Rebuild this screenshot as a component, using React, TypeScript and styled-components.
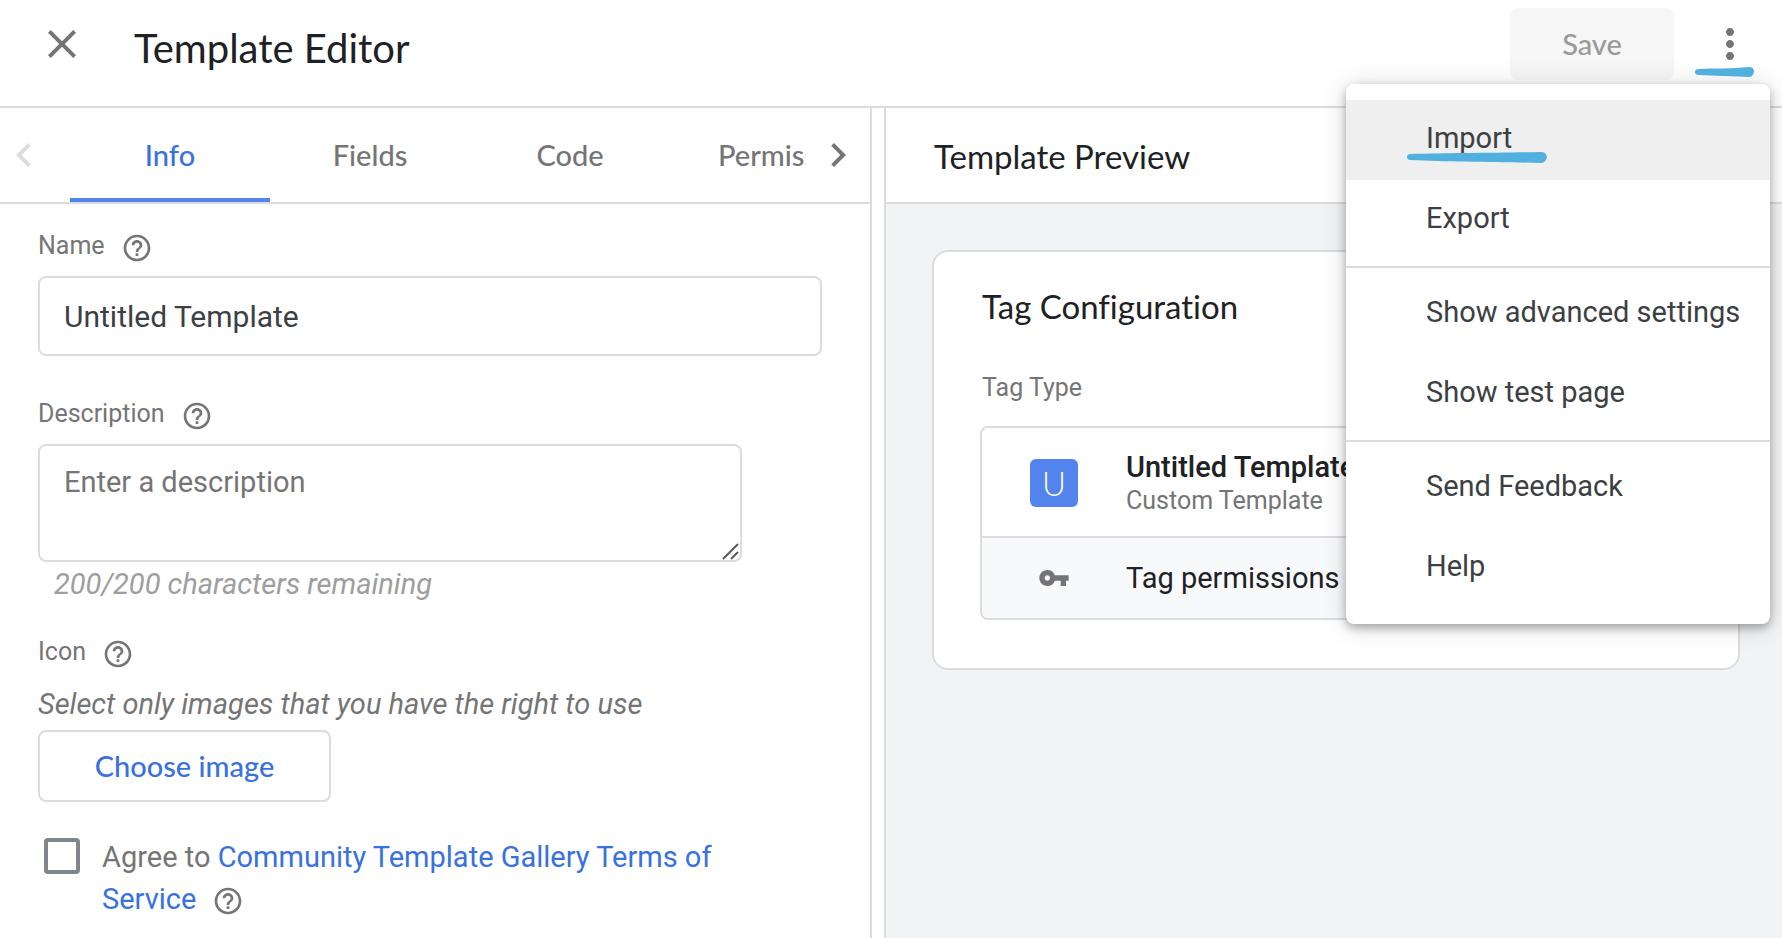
import React, { useId } from 'react';
import styled, { createGlobalStyle } from 'styled-components';
import {
  MdChevronLeft,
  MdChevronRight,
  MdClose,
  MdHelpOutline,
  MdMoreVert,
  MdVpnKey,
} from 'react-icons/md';

const color = {
  line: '#dadce0',
  text: '#202124',
  body: '#3c4043',
  muted: '#757575',
  link: '#3871e0',
  accent: '#5383ec',
  canvas: '#f1f3f4',
};

const display = "Lato, 'Open Sans', sans-serif";

const GlobalStyle = createGlobalStyle`
  *, *::before, *::after { box-sizing: border-box; }
  body {
    margin: 0;
    background: #fff;
    color: ${color.text};
    font-family: Roboto, 'Liberation Sans', sans-serif;
    font-size: 29px;
    line-height: 32px;
  }
  button, input, textarea { font: inherit; color: inherit; margin: 0; }
  h1, h2, h3, p { margin: 0; }
`;

const Page = styled.div`
  display: flex;
  flex-direction: column;
  min-height: 100vh;
`;

const Header = styled.header`
  display: flex;
  align-items: flex-start;
  padding: 8px 12px 18px 38px;
  border-bottom: 2px solid ${color.line};
`;

const IconButton = styled.button<{ $width: number }>`
  display: flex;
  flex: none;
  align-items: center;
  justify-content: center;
  width: ${(p) => p.$width}px;
  height: 72px;
  padding: 0;
  border: 0;
  background: none;
  color: ${color.muted};
  cursor: pointer;
`;

const PageTitle = styled.h1`
  flex: 1;
  padding-left: 48px;
  font: 400 40px/80px ${display};
`;

const SaveButton = styled.button`
  width: 164px;
  height: 72px;
  margin-right: 16px;
  padding: 0;
  border: 0;
  border-radius: 8px;
  background: #f6f6f6;
  color: #9a9a9a;
  font: 500 29px/32px ${display};
`;

const MenuAnchor = styled.div`
  position: relative;
  flex: none;
`;

const Menu = styled.div`
  position: absolute;
  z-index: 2;
  top: 76px;
  right: 0;
  min-width: 424px;
  padding: 16px 0;
  border-radius: 8px;
  background: #fff;
  box-shadow: 0 4px 10px rgba(0, 0, 0, 0.3), 0 2px 28px rgba(0, 0, 0, 0.14);
`;

const MenuItem = styled.button<{ $active?: boolean }>`
  position: relative;
  display: block;
  width: 100%;
  height: 80px;
  padding: 0 24px 4px 80px;
  border: 0;
  background: ${(p) => (p.$active ? '#efefef' : 'transparent')};
  color: ${color.body};
  text-align: left;
  white-space: nowrap;
  cursor: pointer;
`;

const MenuDivider = styled.hr`
  height: 2px;
  margin: 6px 0;
  border: 0;
  background: ${color.line};
`;

const Marker = styled.svg<{ $left: number; $top: number }>`
  position: absolute;
  z-index: 3;
  left: ${(p) => p.$left}px;
  top: ${(p) => p.$top}px;
  fill: #52b0de;
  pointer-events: none;
`;

const Workspace = styled.main`
  display: flex;
  flex: 1;
  justify-content: space-between;
`;

const EditorPane = styled.section`
  width: calc(50% - 19px);
  border-right: 2px solid ${color.line};
`;

const PreviewPane = styled.section`
  width: calc(50% + 7px);
  border-left: 2px solid ${color.line};
  background: ${color.canvas};
`;

const TabBar = styled.div`
  display: flex;
  height: 96px;
  border-bottom: 2px solid ${color.line};
`;

const ScrollButton = styled.button<{ $side: 'left' | 'right' }>`
  display: flex;
  flex: none;
  align-items: center;
  width: ${(p) => (p.$side === 'left' ? 70 : 64)}px;
  padding: 0 8px 0 ${(p) => (p.$side === 'left' ? 0 : 8)}px;
  border: 0;
  background: none;
  color: ${color.muted};

  &:disabled { color: #dcdcdc; }
  svg { flex: none; }
`;

const TabList = styled.div`
  display: flex;
  flex: 1;
  min-width: 0;
  overflow: hidden;
`;

const Tab = styled.button<{ $selected?: boolean }>`
  flex: none;
  min-width: 200px;
  padding: 4px 48px 0;
  border: 0;
  border-bottom: 4px solid ${(p) => (p.$selected ? color.accent : 'transparent')};
  background: none;
  color: ${(p) => (p.$selected ? color.link : color.muted)};
  font: 500 29px/32px ${display};
  cursor: pointer;
`;

const Form = styled.form`
  padding: 28px 48px 12px 38px;
`;

const Field = styled.div`
  margin-bottom: 44px;
`;

const LabelRow = styled.div`
  display: flex;
  gap: 16px;
  margin-bottom: 12px;
  color: ${color.muted};
  font-size: 25px;
  line-height: 28px;
`;

const HelpButton = styled.button`
  display: inline-flex;
  padding: 0;
  border: 0;
  background: none;
  color: ${color.muted};
  cursor: pointer;
`;

const TextInput = styled.input`
  display: block;
  width: 100%;
  height: 80px;
  padding: 0 24px;
  border: 2px solid ${color.line};
  border-radius: 8px;
  outline: 0;
  color: ${color.body};
  font-size: 30px;
`;

const TextAreaFrame = styled.div`
  position: relative;
  width: calc(100% - 80px);
`;

const TextArea = styled.textarea`
  display: block;
  width: 100%;
  height: 118px;
  padding: 20px 24px;
  border: 2px solid ${color.line};
  border-radius: 8px;
  outline: 0;
  resize: none;

  &::placeholder { color: ${color.muted}; opacity: 1; }
`;

const Grip = styled.svg`
  position: absolute;
  right: 3px;
  bottom: 2px;
  fill: none;
  stroke: #5a5a5a;
  stroke-width: 2;
  pointer-events: none;
`;

const Counter = styled.p`
  padding: 6px 16px 38px;
  color: #9e9e9e;
  font-style: italic;
`;

const Note = styled.p`
  padding: 6px 0 10px;
  color: ${color.muted};
  font-style: italic;
`;

const ChooseButton = styled.button`
  display: block;
  min-width: 293px;
  height: 72px;
  padding: 0 48px;
  border: 2px solid ${color.line};
  border-radius: 8px;
  background: #fff;
  color: ${color.link};
  font: 500 29px/32px ${display};
  cursor: pointer;
`;

const Agreement = styled.div`
  display: flex;
  gap: 22px;
  max-width: 690px;
  margin-top: 34px;
  padding-left: 6px;
  color: ${color.muted};
  line-height: 42px;
`;

const Checkbox = styled.input`
  flex: none;
  width: 36px;
  height: 36px;
  margin-top: 2px;
  appearance: none;
  border: 4px solid #80868b;
  border-radius: 4px;

  &:checked { background: ${color.accent}; }
`;

const InlineHelp = styled(HelpButton)`
  margin-left: 16px;
  vertical-align: middle;
`;

const Link = styled.a`
  color: ${color.link};
  text-decoration: none;
`;

const PreviewHeader = styled.div`
  height: 96px;
  padding: 0 48px;
  border-bottom: 2px solid ${color.line};
  background: #fff;
`;

const PreviewTitle = styled.h2`
  font: 400 33px/96px ${display};
`;

const Card = styled.article`
  margin: 46px 42px 46px 46px;
  padding: 34px 46px 48px;
  border: 2px solid ${color.line};
  border-radius: 16px;
  background: #fff;
`;

const CardTitle = styled.h3`
  padding: 0 2px 46px;
  font: 400 33px/40px ${display};
  font-variant-ligatures: none;
`;

const CardLabel = styled.p`
  padding: 0 2px 22px;
  color: ${color.muted};
  font-size: 25px;
`;

const TypeBox = styled.div`
  overflow: hidden;
  border: 2px solid ${color.line};
  border-radius: 8px;
`;

const TypeRow = styled.div<{ $tinted?: boolean }>`
  display: flex;
  align-items: center;
  gap: 48px;
  height: ${(p) => (p.$tinted ? 82 : 108)}px;
  padding: ${(p) => (p.$tinted ? 0 : 2)}px 48px 0;
  border-top: ${(p) => (p.$tinted ? `2px solid ${color.line}` : '0')};
  background: ${(p) => (p.$tinted ? '#f8f9fb' : '#fff')};
  white-space: nowrap;
`;

const IconSlot = styled.div<{ $filled?: boolean }>`
  display: flex;
  flex: none;
  align-items: center;
  justify-content: center;
  width: 48px;
  height: 48px;
  border-radius: 6px;
  background: ${(p) => (p.$filled ? color.accent : 'transparent')};
  color: ${(p) => (p.$filled ? '#fff' : color.muted)};
  font: 300 33px/48px ${display};
`;

const TypeName = styled.p`
  font-weight: 500;
  line-height: 36px;
`;

const TypeKind = styled.p`
  color: ${color.muted};
  font-size: 25px;
`;

function Help({ topic }: { topic: string }) {
  return (
    <HelpButton type="button" aria-label={`Help: ${topic}`}>
      <MdHelpOutline size={32} />
    </HelpButton>
  );
}

export default function App() {
  const nameId = useId();
  const descriptionId = useId();
  const agreeId = useId();

  return (
    <>
      <GlobalStyle />
      <Page>
        <Header>
          <IconButton $width={48} aria-label="Close">
            <MdClose size={48} />
          </IconButton>
          <PageTitle>Template Editor</PageTitle>
          <SaveButton disabled>Save</SaveButton>
          <MenuAnchor>
            <IconButton $width={80} aria-label="More actions" aria-haspopup="menu">
              <MdMoreVert size={48} />
            </IconButton>
            <Marker $left={5} $top={58} width="60" height="12" viewBox="0 0 60 12">
              <path d="M4 3 C18 2 38 3 54 1 Q59 1 59 6 Q58 11 54 11 C38 10 18 10 4 9 Q0 9 0 6 Q0 3 4 3Z" />
            </Marker>
            <Menu role="menu">
              <MenuItem role="menuitem" $active>
                Import
                <Marker $left={61} $top={51} width="140" height="12" viewBox="0 0 140 12">
                  <path d="M4 3 C40 2 95 2 134 1 Q139 1 140 6 Q139 11 135 12 C95 11 40 11 4 9 Q0 9 0 6 Q0 3 4 3Z" />
                </Marker>
              </MenuItem>
              <MenuItem role="menuitem">Export</MenuItem>
              <MenuDivider />
              <MenuItem role="menuitem">Show advanced settings</MenuItem>
              <MenuItem role="menuitem">Show test page</MenuItem>
              <MenuDivider />
              <MenuItem role="menuitem">Send Feedback</MenuItem>
              <MenuItem role="menuitem">Help</MenuItem>
            </Menu>
          </MenuAnchor>
        </Header>

        <Workspace>
          <EditorPane>
            <TabBar>
              <ScrollButton $side="left" disabled aria-label="Previous tabs">
                <MdChevronLeft size={48} />
              </ScrollButton>
              <TabList role="tablist">
                <Tab role="tab" aria-selected $selected>Info</Tab>
                <Tab role="tab">Fields</Tab>
                <Tab role="tab">Code</Tab>
                <Tab role="tab">Permissions</Tab>
              </TabList>
              <ScrollButton $side="right" aria-label="Next tabs">
                <MdChevronRight size={48} />
              </ScrollButton>
            </TabBar>

            <Form>
              <Field>
                <LabelRow>
                  <label htmlFor={nameId}>Name</label>
                  <Help topic="Name" />
                </LabelRow>
                <TextInput id={nameId} defaultValue="Untitled Template" />
              </Field>

              <LabelRow>
                <label htmlFor={descriptionId}>Description</label>
                <Help topic="Description" />
              </LabelRow>
              <TextAreaFrame>
                <TextArea id={descriptionId} placeholder="Enter a description" />
                <Grip width="17" height="17" viewBox="0 0 17 17">
                  <path d="M1 16 L16 1 M9 16 L16 9" />
                </Grip>
              </TextAreaFrame>
              <Counter>200/200 characters remaining</Counter>

              <LabelRow>
                <span>Icon</span>
                <Help topic="Icon" />
              </LabelRow>
              <Note>Select only images that you have the right to use</Note>
              <ChooseButton type="button">Choose image</ChooseButton>

              <Agreement>
                <Checkbox type="checkbox" id={agreeId} />
                <div>
                  <label htmlFor={agreeId}>Agree to </label>
                  <Link href="#terms">Community Template Gallery Terms of Service</Link>
                  <InlineHelp type="button" aria-label="Help: Terms of Service">
                    <MdHelpOutline size={32} />
                  </InlineHelp>
                </div>
              </Agreement>
            </Form>
          </EditorPane>

          <PreviewPane>
            <PreviewHeader>
              <PreviewTitle>Template Preview</PreviewTitle>
            </PreviewHeader>
            <Card>
              <CardTitle>Tag Configuration</CardTitle>
              <CardLabel>Tag Type</CardLabel>
              <TypeBox>
                <TypeRow>
                  <IconSlot $filled>U</IconSlot>
                  <div>
                    <TypeName>Untitled Template</TypeName>
                    <TypeKind>Custom Template</TypeKind>
                  </div>
                </TypeRow>
                <TypeRow $tinted>
                  <IconSlot>
                    <MdVpnKey size={32} />
                  </IconSlot>
                  <p>Tag permissions</p>
                </TypeRow>
              </TypeBox>
            </Card>
          </PreviewPane>
        </Workspace>
      </Page>
    </>
  );
}
